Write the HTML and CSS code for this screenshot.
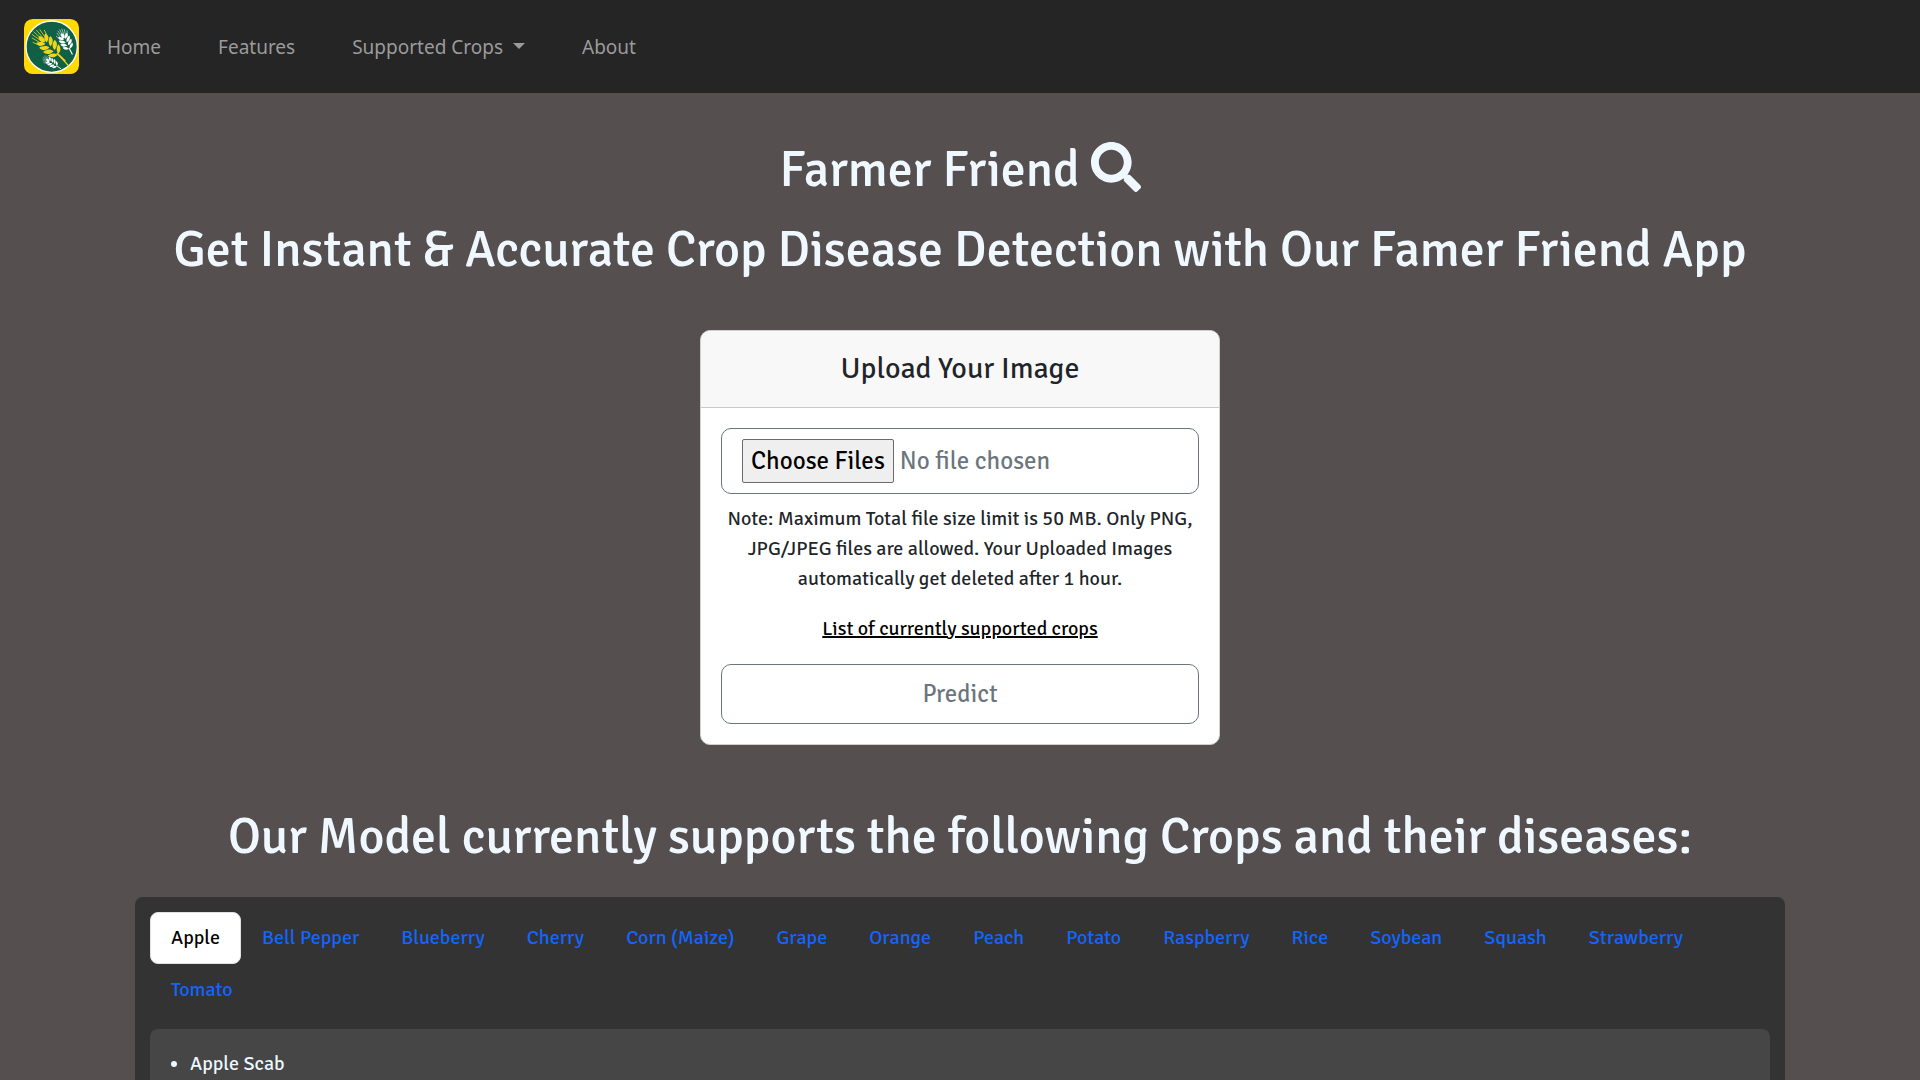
FILE: index.html
```html
<!DOCTYPE html>
<html lang="en">
<head>
  <meta charset="utf-8">
  <meta name="viewport" content="width=device-width, initial-scale=1">
  <title>Farmer Friend</title>
  <link rel="stylesheet" href="styles.css">
</head>
<body>
  <nav class="navbar">
    <a class="brand" href="#" aria-label="Farmer Friend">
      <svg class="brand-logo" viewBox="0 0 165 165" aria-hidden="true">
        <defs>
          <g id="ear">
            <path d="M0 30V62" stroke-width="4" fill="none"/>
            <path d="M0-30V-56M-5-28-8-54M5-28 8-54M-10-24-15-48M10-24 15-48M-14-14-22-38M14-14 22-38" stroke-width="2" fill="none"/>
            <path stroke="none" d="M0-38C8-30 8-20 0-14C-8-20-8-30 0-38ZM-2-10C-3-20-9-27-17-30C-20-19-14-11-2-10ZM2-10C3-20 9-27 17-30C20-19 14-11 2-10ZM-2 5C-3-6-12-13-21-15C-22-3-15 4-2 5ZM2 5C3-6 12-13 21-15C22-3 15 4 2 5ZM-2 20C-3 8-12 2-22 1C-22 13-15 19-2 20ZM2 20C3 8 12 2 22 1C22 13 15 19 2 20ZM-2 35C-3 24-11 18-20 17C-19 28-13 34-2 35ZM2 35C3 24 11 18 20 17C19 28 13 34 2 35Z"/>
          </g>
        </defs>
        <rect width="165" height="165" rx="26" fill="#ffd900"/>
        <circle cx="83" cy="83" r="77" fill="#0f6045" stroke="#fff" stroke-width="4"/>
        <use href="#ear" transform="translate(74 80) rotate(-47) scale(1.15 1.1)" fill="#efd51c" stroke="#efd51c"/>
        <path d="M105 108 133 140" stroke="#efd51c" stroke-width="4"/>
        <use href="#ear" transform="translate(125 67) rotate(-27) scale(.84 .72)" fill="#fff" stroke="#fff"/>
        <use href="#ear" transform="translate(83 131) rotate(-57) scale(.6 .54)" fill="#fff" stroke="#fff"/>
      </svg>
    </a>
    <div class="nav-links">
      <a href="#">Home</a>
      <a href="#">Features</a>
      <a class="dropdown" href="#">Supported Crops</a>
      <a href="#">About</a>
    </div>
  </nav>

  <main>
    <header class="hero">
      <h1>Farmer Friend
        <svg class="search-icon" viewBox="0 0 512 512" aria-hidden="true"><path fill="currentColor" d="M505 442.700 405.300 343c-4.500-4.500-10.600-7-17-7H372c27.600-35.300 44-79.700 44-128C416 93.100 322.900 0 208 0S0 93.100 0 208s93.100 208 208 208c48.300 0 92.700-16.400 128-44v16.300c0 6.400 2.500 12.500 7 17l99.700 99.700c9.400 9.400 24.600 9.400 33.900 0l28.300-28.300c9.400-9.400 9.400-24.600.1-34zM208 336c-70.700 0-128-57.200-128-128 0-70.700 57.200-128 128-128 70.700 0 128 57.200 128 128 0 70.700-57.200 128-128 128z"/></svg>
      </h1>
      <h1>Get Instant &amp; Accurate Crop Disease Detection with Our Famer Friend App</h1>
    </header>

    <form class="card">
      <h2 class="card-header"><label for="images">Upload Your Image</label></h2>
      <div class="card-body">
        <input class="file-input" id="images" type="file" multiple>
        <p class="note">Note: Maximum Total file size limit is 50 MB. Only PNG, JPG/JPEG files are allowed. Your Uploaded Images automatically get deleted after 1 hour.</p>
        <a class="crops-link" href="#crops">List of currently supported crops</a>
        <button class="predict" type="button">Predict</button>
      </div>
    </form>

    <h1 class="section-title">Our Model currently supports the following Crops and their diseases:</h1>

    <section class="crops" id="crops">
      <div class="tabs" role="tablist">
        <button class="tab active" type="button" role="tab" aria-selected="true">Apple</button>
        <button class="tab" type="button" role="tab">Bell Pepper</button>
        <button class="tab" type="button" role="tab">Blueberry</button>
        <button class="tab" type="button" role="tab">Cherry</button>
        <button class="tab" type="button" role="tab">Corn (Maize)</button>
        <button class="tab" type="button" role="tab">Grape</button>
        <button class="tab" type="button" role="tab">Orange</button>
        <button class="tab" type="button" role="tab">Peach</button>
        <button class="tab" type="button" role="tab">Potato</button>
        <button class="tab" type="button" role="tab">Raspberry</button>
        <button class="tab" type="button" role="tab">Rice</button>
        <button class="tab" type="button" role="tab">Soybean</button>
        <button class="tab" type="button" role="tab">Squash</button>
        <button class="tab" type="button" role="tab">Strawberry</button>
        <button class="tab" type="button" role="tab">Tomato</button>
      </div>
      <div class="tab-panel" role="tabpanel">
        <ul>
          <li>Apple Scab</li>
        </ul>
      </div>
    </section>
  </main>
</body>
</html>
```
FILE: styles.css
```css
* {
  box-sizing: border-box;
}

body {
  margin: 0;
  background: #564f4f;
  color: #212529;
  font: 20px/30px "Signika Negative", Lato, sans-serif;
}

h1,
h2,
p,
ul {
  margin: 0;
}

h1 {
  color: aliceblue;
  font-size: 50px;
  line-height: 60px;
  font-weight: 500;
}

.navbar {
  display: flex;
  align-items: center;
  gap: 28px;
  min-height: 93px;
  padding: 0 24px;
  background: #252525;
  font-family: "Segoe UI", "Noto Sans", sans-serif;
  font-size: 19px;
}

.brand,
.brand-logo {
  display: block;
  width: 55px;
  height: 55px;
}

.nav-links {
  display: flex;
  gap: 57px;
}

.nav-links a {
  color: #9b9b9b;
  text-decoration: none;
}

.dropdown::after {
  content: "";
  display: inline-block;
  margin-left: 10px;
  vertical-align: 5px;
  border-top: 6px solid;
  border-right: 6px solid transparent;
  border-left: 6px solid transparent;
}

.hero {
  display: grid;
  gap: 20px;
  padding: 47px 20px 0;
  text-align: center;
}

.search-icon {
  width: 50px;
  height: 50px;
  vertical-align: -6px;
}

.card {
  max-width: 520px;
  margin: 50px auto 0;
  border: 1px solid #d0d0d0;
  border-radius: 10px;
  background: #fff;
  text-align: center;
  overflow: hidden;
}

.card-header {
  padding: 20px;
  border-bottom: 1px solid #c9cacb;
  background: #f8f8f8;
  font-size: 30px;
  line-height: 36px;
  font-weight: 400;
}

.card-body {
  display: flex;
  flex-direction: column;
  padding: 20px;
}

.file-input,
.predict {
  width: 100%;
  padding: 10px 20px;
  border: 1px solid #6c757d;
  border-radius: 10px;
  background: #fff;
  color: #6c757d;
  font-family: inherit;
  font-size: 25px;
  line-height: 38px;
}

.file-input::file-selector-button {
  height: 44px;
  padding: 1px 8px;
  margin-right: 6px;
  border: 1px solid #6b6b6b;
  border-radius: 2px;
  background: #efefef;
  color: #000;
  font: inherit;
}

.note {
  margin: 10px 0 20px;
}

.crops-link {
  align-self: center;
  color: #000;
}

.predict {
  margin-top: 20px;
}

.section-title {
  padding: 0 20px;
  margin: 62px 0 30px;
  text-align: center;
}

.crops {
  max-width: 1650px;
  margin: 0 auto;
  padding: 15px 15px 0;
  border-radius: 8px 8px 0 0;
  background: #333;
}

.tabs {
  display: flex;
  flex-wrap: wrap;
}

.tab {
  padding: 10px 20px;
  border: 1px solid transparent;
  border-radius: 8px;
  background: none;
  color: #1266ff;
  font: inherit;
}

.tab.active {
  border-color: #dee2e6;
  background: #fff;
  color: #000;
}

.tab-panel {
  margin-top: 13px;
  padding: 20px;
  border-radius: 8px 8px 0 0;
  background: #464646;
  color: aliceblue;
}

.tab-panel ul {
  padding-left: 20px;
}
```
